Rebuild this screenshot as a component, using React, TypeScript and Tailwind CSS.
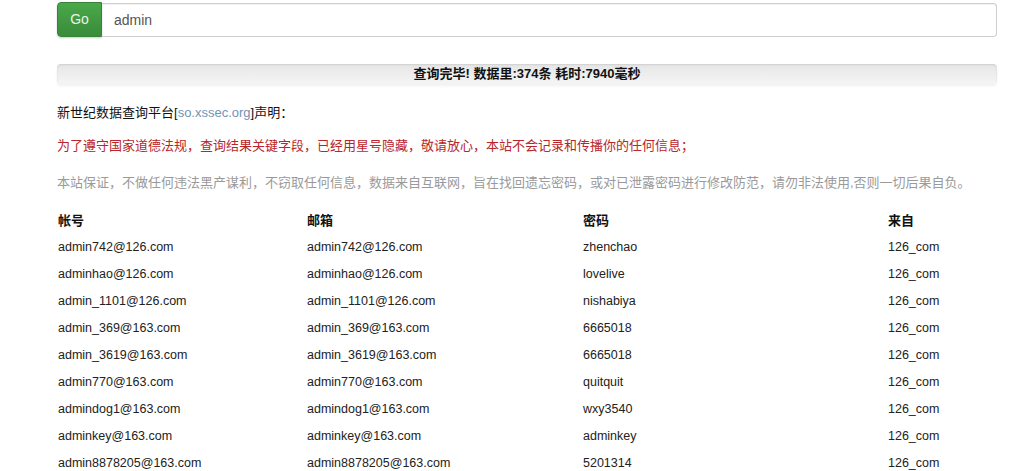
import React from "react";

const rows = [
  ["admin742@126.com", "admin742@126.com", "zhenchao", "126_com"],
  ["adminhao@126.com", "adminhao@126.com", "lovelive", "126_com"],
  ["admin_1101@126.com", "admin_1101@126.com", "nishabiya", "126_com"],
  ["admin_369@163.com", "admin_369@163.com", "6665018", "126_com"],
  ["admin_3619@163.com", "admin_3619@163.com", "6665018", "126_com"],
  ["admin770@163.com", "admin770@163.com", "quitquit", "126_com"],
  ["admindog1@163.com", "admindog1@163.com", "wxy3540", "126_com"],
  ["adminkey@163.com", "adminkey@163.com", "adminkey", "126_com"],
  ["admin8878205@163.com", "admin8878205@163.com", "5201314", "126_com"],
];

export default function App() {
  return (
    <div
      className="min-h-[471px] bg-white text-[#333]"
      style={{ fontFamily: '"Liberation Sans", "Noto Sans CJK SC", sans-serif' }}
    >
      <div className="ml-[57px] w-[940px] pt-[3px]">
        {/* input group */}
        <div className="flex h-[34px]">
          <button className="w-[45px] h-[35px] -mt-px rounded-l-[4px] bg-gradient-to-b from-[#4aa84a] to-[#3a8c3a] border border-[#378437] text-[14px] text-[#e8f5e8] shadow-[0_1px_2px_rgba(0,0,0,0.2)] flex items-center justify-center">
            Go
          </button>
          <div className="flex-1 border border-[#cfcfcf] border-l-0 rounded-r-[4px] flex items-center pl-[12px] text-[14px] text-[#555] shadow-[inset_0_1px_1px_rgba(0,0,0,0.05)]">
            admin
          </div>
        </div>

        {/* progress */}
        <div className="mt-[27px] h-[20px] rounded-[4px] bg-gradient-to-b from-[#e6e6e6] to-[#f5f5f5] shadow-[inset_0_1px_2px_rgba(0,0,0,0.1),0_2px_3px_rgba(0,0,0,0.06)] flex items-center justify-center text-[13px] font-bold text-[#111]">
          查询完毕! 数据里:374条 耗时:7940毫秒
        </div>

        <div className="mt-[19px] h-[20px] leading-[20px] text-[13px] text-[#111]">
          新世纪数据查询平台[<span className="text-[#7393b3]">so.xssec.org</span>]声明：
        </div>
        <div className="mt-[13px] h-[20px] leading-[20px] text-[13px] text-[#b8262b]">
          为了遵守国家道德法规，查询结果关键字段，已经用星号隐藏，敬请放心，本站不会记录和传播你的任何信息；
        </div>
        <div className="mt-[17px] h-[20px] leading-[20px] text-[13px] text-[#9a9a9a]">
          本站保证，不做任何违法黑产谋利，不窃取任何信息，数据来自互联网，旨在找回遗忘密码，或对已泄露密码进行修改防范，请勿非法使用,否则一切后果自负。
        </div>

        {/* table */}
        <div className="mt-[14px] pl-px">
          <div className="grid grid-cols-[249px_276px_305px_1fr] h-[27px] items-center text-[13px] font-bold text-[#111]">
            <div>帐号</div>
            <div>邮箱</div>
            <div>密码</div>
            <div>来自</div>
          </div>
          {rows.map((r, i) => (
            <div
              key={i}
              className="grid grid-cols-[249px_276px_305px_1fr] h-[27px] items-center text-[12.5px] text-[#222]"
            >
              {r.map((c, j) => (
                <div key={j}>{c}</div>
              ))}
            </div>
          ))}
        </div>
      </div>
    </div>
  );
}
